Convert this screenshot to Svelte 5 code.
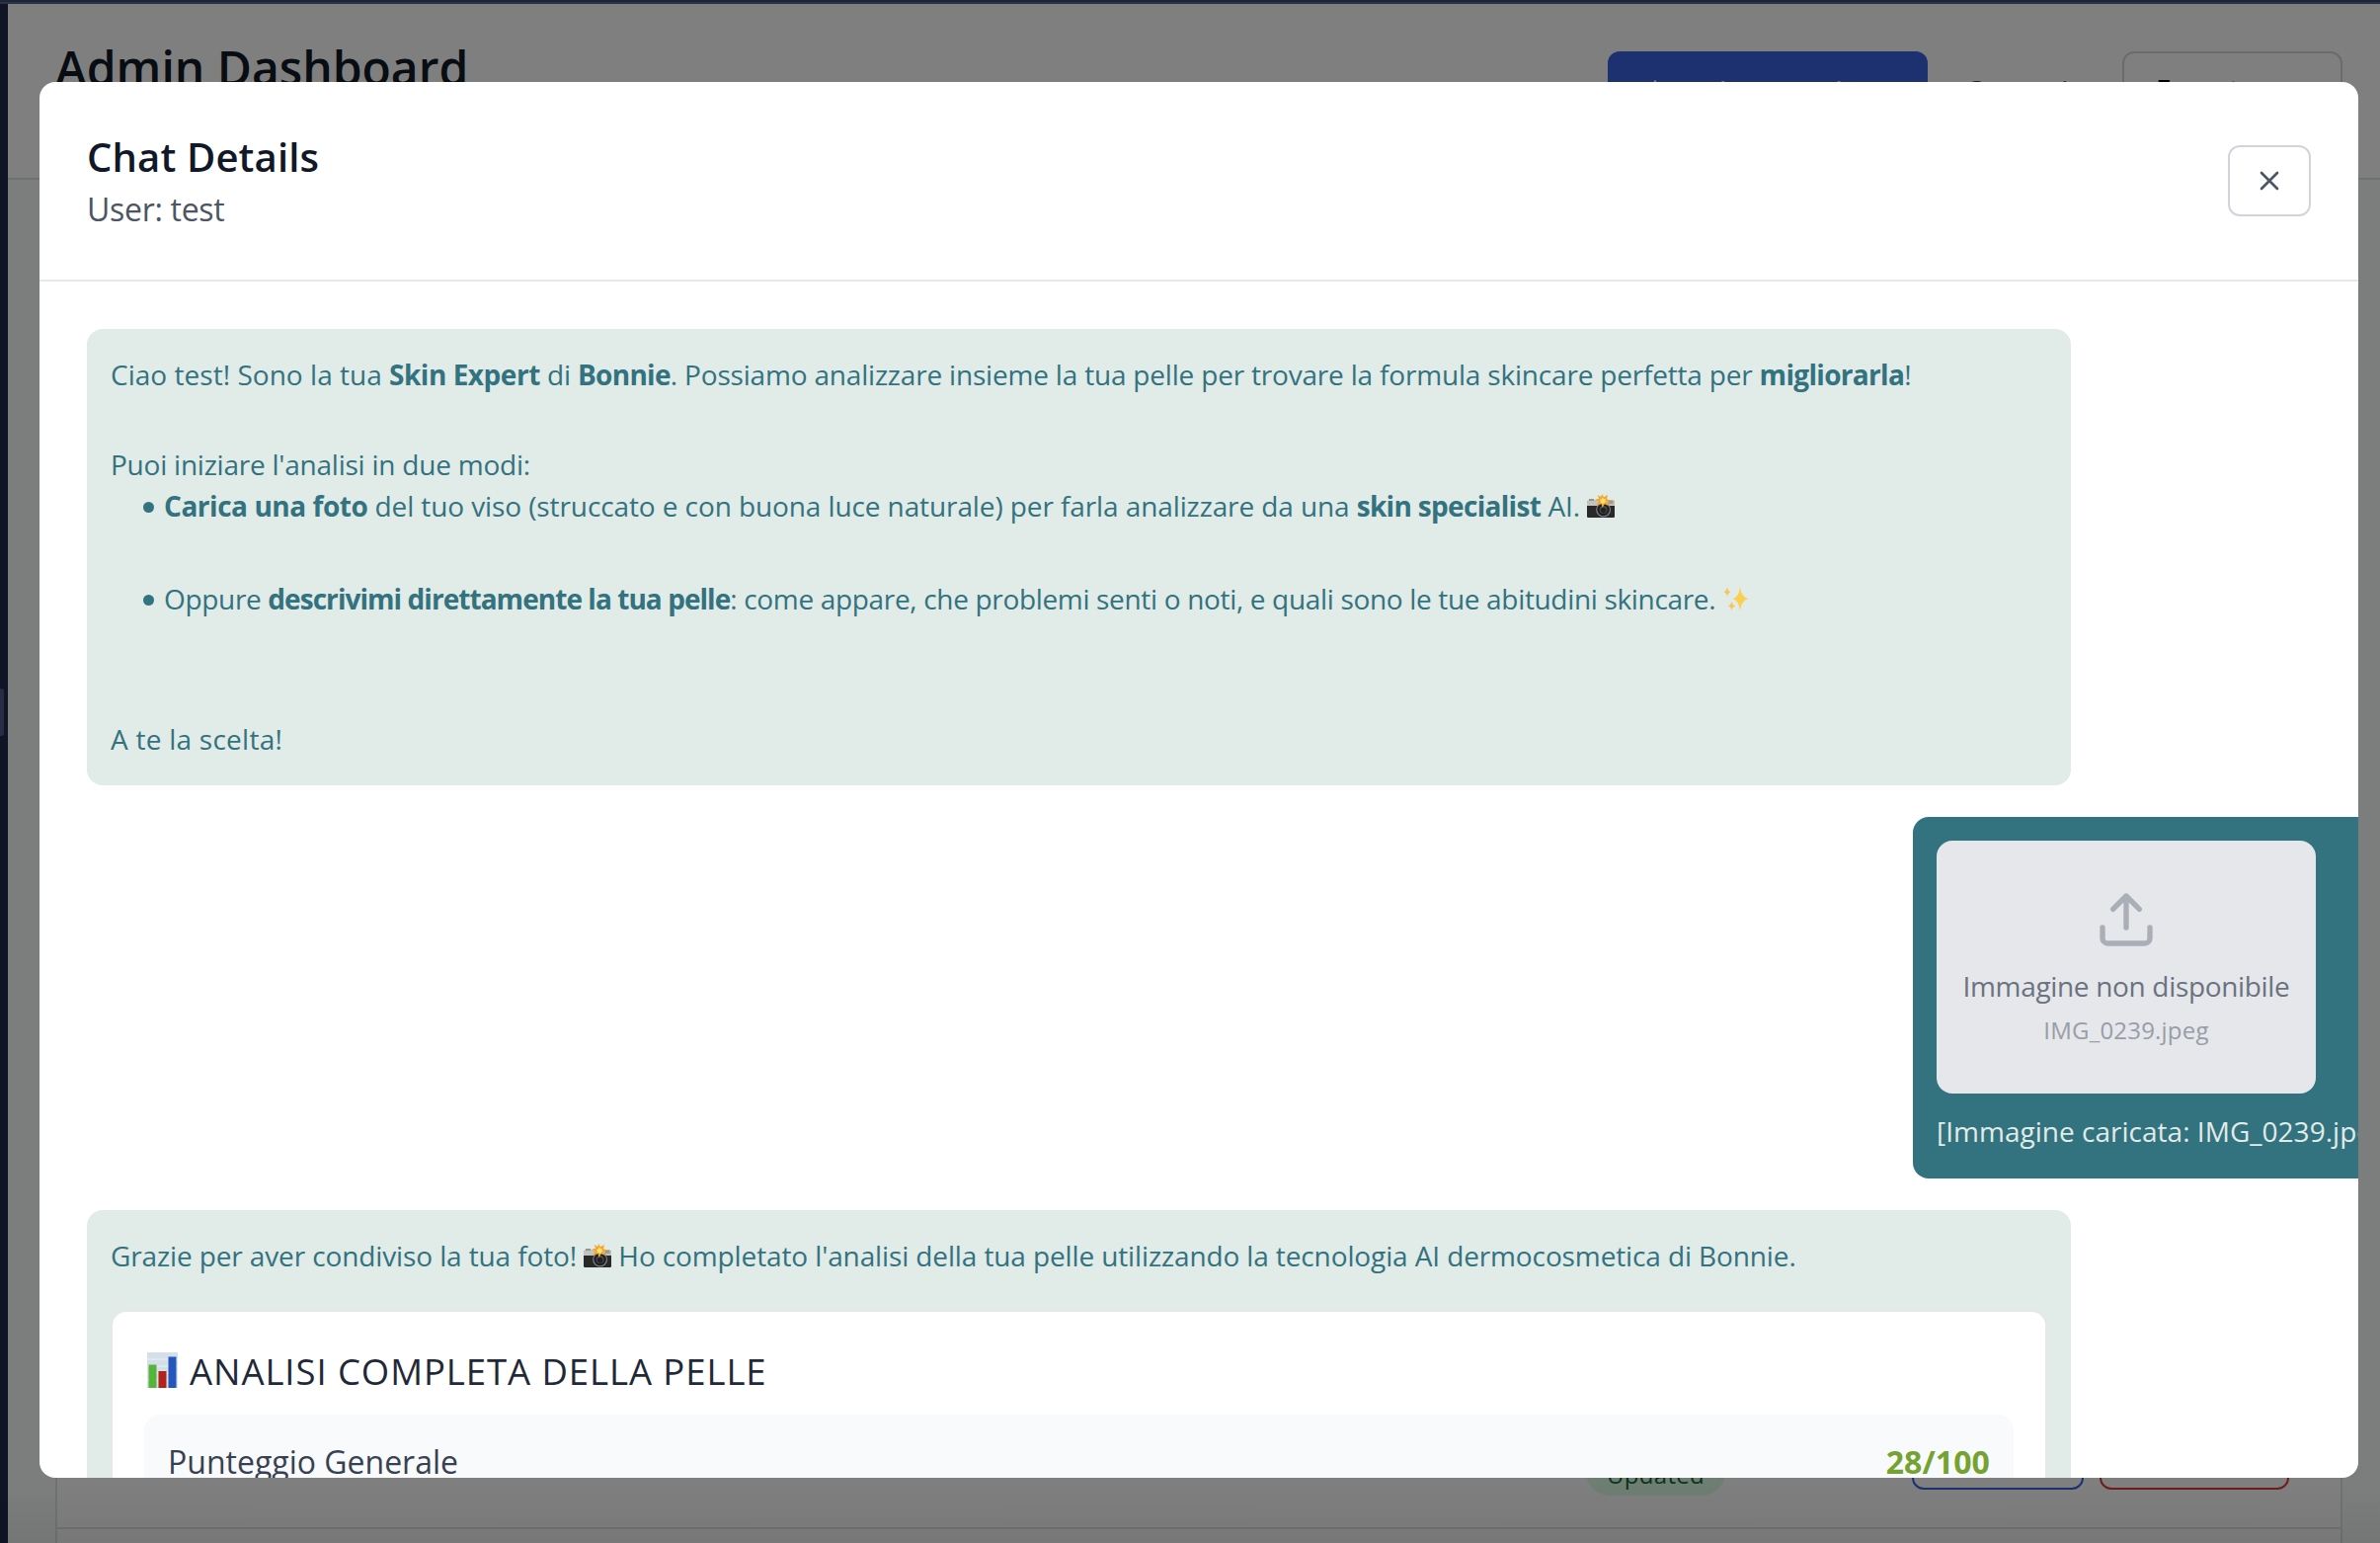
<script>
  const fileName = 'IMG_0239.jpeg';
</script>

{#snippet camera()}
  <svg class="emoji" viewBox="0 0 28 24" aria-label="📸">
    <rect x="0" y="7" width="28" height="17" rx="1.2" fill="#29292a" />
    <path d="M0 12V7.6L2 6h24l2 1.6V12z" fill="#c3c3bf" />
    <rect x="2" y="5" width="5" height="2" fill="#97938a" />
    <rect x="21.5" y="6.5" width="5" height="3.5" fill="#a99b79" />
    <circle cx="16.6" cy="16" r="7.5" fill="#7d7d7d" />
    <circle cx="16.6" cy="16" r="6.2" fill="#1d1e20" />
    <circle cx="16.6" cy="16" r="4" fill="#4a4d51" />
    <circle cx="16.6" cy="16.6" r="2.8" fill="#202226" />
    <path d="M15.3 0l1.7 3.3 4-2.3-1 4.2 4 1.3-4.1 1.5 2 4-4.2-1.7-2 3.7-1.3-4-4.4 1.6 1.7-4-3.6-2 4.2-.9L10.600 1l3.600 2z" fill="#f5a52c" />
    <path d="M15.700 3.300l1.300 2 2-.6-.7 2 1.400 1.300-2 .5-.6 2-1.600-1.400-2.200.4.8-2L12.700 6l2.200-.4z" fill="#ffe577" />
  </svg>
{/snippet}

<div class="screen">
  <aside class="sidebar"><div class="thumb"></div></aside>

  <div class="page">
    <header class="topbar">
      <h1>Admin Dashboard</h1>
      <div class="actions">
        <button class="primary">
          <svg class="plus" viewBox="0 0 24 24"><path d="M12 5v14M5 12h14" /></svg>
          Seleziona Chat
        </button>
        <span class="label">Contatti</span>
        <button class="select">Esporta</button>
      </div>
    </header>
    <main>
      <section class="table">
        <div class="row">
          <span class="badge">Updated</span>
          <div class="row-actions">
            <button class="view" aria-label="View"></button>
            <button class="delete" aria-label="Delete"></button>
          </div>
        </div>
        <div class="row-next"></div>
      </section>
    </main>
  </div>

  <div class="overlay"></div>
  <div class="strip"></div>

  <div class="modal">
    <div class="modal-head">
      <div>
        <h2>Chat Details</h2>
        <p class="user">User: test</p>
      </div>
      <button class="close" aria-label="Close">
        <svg viewBox="0 0 24 24"><path d="M18 6 6 18M6 6l12 12" /></svg>
      </button>
    </div>

    <div class="chat">
      <article class="bot intro">
        <p class="greeting"><span class="hello">Ciao test! Sono la tua</span> <strong>Skin Expert</strong> di <strong class="tight">Bonnie</strong>. Possiamo analizzare insieme la tua pelle per trovare la formula skincare perfetta per <strong class="tight">migliorarla</strong>!</p>
        <p class="lead">Puoi iniziare l'analisi in due modi:</p>
        <ul>
          <li class="photo"><strong>Carica una foto</strong> del tuo viso (struccato e con buona luce naturale) per farla analizzare da una <strong class="tight">skin specialist</strong> AI. {@render camera()}</li>
          <li class="describe">Oppure <strong>descrivimi direttamente la tua pelle</strong>: come appare, che problemi senti o noti, e quali sono le tue abitudini skincare. <svg class="emoji sparkles" viewBox="0 0 28 24" aria-label="✨"><path d="M18 0q1 10.500 8.500 12.300Q19 14 18 24q-1-10-7.500-11.700Q17 10.500 18 0z" fill="#fbd04e" /><path d="M5 0q.5 4.500 3.500 5.300Q5.500 6.200 5 10.300 4.500 6.200 1.500 5.300 4.500 4.500 5 0zM9.500 14.500q.5 4 3.800 4.900-3.300.9-3.800 4.600-.5-3.700-3.600-4.600 3.100-.9 3.600-4.900z" fill="#f9c552" /></svg></li>
        </ul>
        <p class="outro">A te la scelta!</p>
      </article>

      <article class="me">
        <div class="missing">
          <svg class="upload" viewBox="0 0 24 24"><path d="M21 15v4a2 2 0 0 1-2 2H5a2 2 0 0 1-2-2v-4M17 8l-5-5-5 5M12 3v12" /></svg>
          <p class="missing-title">Immagine non disponibile</p>
          <p class="missing-name">{fileName}</p>
        </div>
        <p class="caption">[Immagine caricata: {fileName}]</p>
      </article>

      <article class="bot">
        <p class="thanks">Grazie per aver condiviso la tua foto! {@render camera()} Ho completato l'analisi della tua pelle utilizzando la tecnologia AI dermocosmetica di Bonnie.</p>
        <div class="card">
          <h3>
            <svg class="chart" viewBox="0 0 31 36" aria-label="📊">
              <rect width="31" height="36" fill="#d5dfe9" />
              <path d="M0 7h31M0 14h31M0 21h31M0 28h31" stroke="#e9eff5" />
              <rect x="1.500" y="12.500" width="8" height="23.500" fill="#55b53a" />
              <rect x="11.500" y="19" width="8" height="17" fill="#b12318" />
              <rect x="21.500" y="4.500" width="8" height="31.500" fill="#2457bd" />
            </svg>
            <span>ANALISI COMPLETA DELLA PELLE</span>
          </h3>
          <div class="score">
            <span class="score-name">Punteggio Generale</span>
            <span class="score-value">28/100</span>
          </div>
        </div>
      </article>
    </div>
  </div>
</div>

<style>
  :global(body) {
    background: #1e2536;
  }
  * {
    box-sizing: border-box;
  }
  h1, h2, h3, p, ul {
    margin: 0;
    padding: 0;
  }
  button {
    font: inherit;
    background: none;
    border: 0;
    padding: 0;
  }
  .screen {
    position: relative;
    display: flex;
    width: 2410px;
    height: 1562px;
    overflow: hidden;
    font-family: 'Open Sans', 'Noto Sans', sans-serif;
    font-size: 28px;
    white-space: nowrap;
  }
  .sidebar {
    display: flex;
    align-items: center;
    width: 8px;
    background: #1e2a4b;
  }
  .thumb {
    width: 4px;
    height: 48px;
    margin-top: -120px;
    border-radius: 0 3px 3px 0;
    background: #52598a;
  }
  .page {
    flex: 1;
    display: flex;
    flex-direction: column;
    padding-top: 4px;
    background: #f8fdfa;
  }
  .topbar {
    display: flex;
    justify-content: space-between;
    align-items: flex-start;
    height: 178px;
    padding: 48px 38px 0 48px;
    border-bottom: 2px solid #e2e2e6;
    background: #fff;
  }
  h1 {
    margin-top: -17px;
    font-size: 48px;
    font-weight: 600;
    line-height: 67px;
    color: #111827;
  }
  .actions {
    display: flex;
    line-height: 72px;
    color: #374151;
  }
  .primary {
    display: flex;
    align-items: center;
    gap: 18px;
    width: 324px;
    height: 76px;
    padding: 3px 0 0 32px;
    border-radius: 12px;
    background: #3a62e2;
    color: #fff;
  }
  .plus {
    width: 32px;
    height: 32px;
    fill: none;
    stroke: #fff;
    stroke-width: 2;
    stroke-linecap: round;
  }
  .label {
    width: 197px;
    padding-left: 38px;
    font-weight: 500;
    line-height: 79px;
  }
  .select {
    width: 223px;
    height: 76px;
    padding-left: 32px;
    border: 2px solid #d5d5df;
    border-radius: 12px;
    text-align: left;
    font-weight: 500;
    line-height: 72px;
  }
  main {
    flex: 1;
    display: flex;
    padding: 48px 38px 0 48px;
  }
  .table {
    flex: 1;
    display: flex;
    flex-direction: column;
    justify-content: flex-end;
    border: 2px solid #e2e2e6;
    border-bottom: 0;
    background: #fff;
  }
  .row {
    display: flex;
    justify-content: flex-end;
    align-items: flex-end;
    padding: 0 52px 32px 0;
    border-bottom: 2px solid #e2e2e6;
  }
  .row-next {
    height: 14px;
  }
  .badge {
    width: 141px;
    height: 66px;
    margin-right: 189px;
    padding: 29px 0 5px;
    border-radius: 24px;
    background: #dcfce7;
    color: #166534;
    font-size: 24px;
    font-weight: 500;
    line-height: 32px;
    letter-spacing: 0.3px;
    text-align: center;
  }
  .row-actions {
    display: flex;
    gap: 16px;
    margin-bottom: 6px;
  }
  .view, .delete {
    width: 174px;
    height: 72px;
    border: 2px solid #3560de;
    border-radius: 12px;
  }
  .delete {
    width: 192px;
    border-color: #dc3a34;
  }
  .overlay {
    position: absolute;
    inset: 0;
    background: linear-gradient(transparent 1500px, rgba(0, 0, 0, 0.06)), rgba(0, 0, 0, 0.5);
  }
  .strip {
    position: absolute;
    top: 0;
    left: 0;
    right: 0;
    height: 4px;
    background: #2b334a;
    border-top: 2px solid #1e2536;
  }
  .modal {
    position: absolute;
    top: 83px;
    left: 40px;
    width: 2348px;
    height: 1413px;
    overflow: hidden;
    border-radius: 16px;
    background: #fff;
  }
  .modal-head {
    display: flex;
    justify-content: space-between;
    padding: 48px;
    height: 202px;
    border-bottom: 2px solid #e5e7eb;
  }
  h2 {
    font-size: 40px;
    font-weight: 600;
    line-height: 56.5px;
    letter-spacing: 0.15px;
    color: #111827;
  }
  .user {
    font-size: 32px;
    line-height: 48px;
    letter-spacing: -0.3px;
    color: #4b5563;
  }
  .close {
    display: grid;
    place-items: center;
    width: 84px;
    height: 72px;
    margin-top: 16px;
    border: 2px solid #d1d5db;
    border-radius: 12px;
  }
  .close svg {
    width: 32px;
    height: 32px;
    fill: none;
    stroke: #4b5563;
    stroke-width: 2;
    stroke-linecap: round;
  }
  .chat {
    display: flex;
    flex-direction: column;
    align-items: flex-start;
    gap: 32px;
    padding: 48px;
  }
  .bot {
    width: 2009px;
    padding: 24px;
    border-radius: 16px;
    background: #e1ebe7;
    color: #33727f;
    line-height: 45.5px;
    letter-spacing: -0.12px;
  }
  .intro {
    height: 462px;
  }
  strong {
    font-weight: 700;
    letter-spacing: -0.46px;
  }
  .tight {
    letter-spacing: -0.68px;
  }
  .greeting {
    letter-spacing: -0.19px;
  }
  .hello {
    letter-spacing: 0.03px;
  }
  .lead {
    margin-top: 45.5px;
    letter-spacing: -0.23px;
  }
  ul {
    list-style: none;
  }
  li {
    display: flex;
    align-items: center;
    height: 42px;
    margin-top: -3px;
    padding-left: 33px;
    line-height: 42px;
    letter-spacing: -0.1px;
    white-space: pre;
  }
  li::before {
    content: '';
    width: 11px;
    height: 11px;
    margin: 4px 10px 0 0;
    border-radius: 50%;
    background: #33727f;
  }
  .describe {
    margin-top: 52px;
    letter-spacing: -0.33px;
  }
  .describe strong {
    letter-spacing: -0.95px;
  }
  .outro {
    margin-top: 99px;
    letter-spacing: 0.25px;
  }
  .emoji {
    display: inline-block;
    width: 28px;
    height: 24px;
    vertical-align: -1px;
  }
  .me {
    width: 520px;
    height: 366px;
    margin-left: 1849px;
    padding: 24px;
    border-radius: 16px;
    background: #33727f;
  }
  .missing {
    display: flex;
    flex-direction: column;
    align-items: center;
    width: 384px;
    height: 256px;
    padding-top: 48px;
    border-radius: 16px;
    background: #e5e7eb;
    color: #6b7280;
  }
  .upload {
    width: 64px;
    height: 64px;
    fill: none;
    stroke: #a9aeb7;
    stroke-width: 2;
    stroke-linecap: round;
    stroke-linejoin: round;
  }
  .missing-title {
    margin-top: 14px;
    line-height: 42px;
    letter-spacing: -0.33px;
  }
  .missing-name {
    margin-top: 5px;
    font-size: 24px;
    line-height: 37px;
    letter-spacing: 0.2px;
    color: #989da7;
  }
  .caption {
    margin-top: 16px;
    line-height: 45.5px;
    letter-spacing: 0.02px;
    color: #e1ebe7;
  }
  .thanks {
    height: 45px;
  }
  .card {
    height: 400px;
    margin-top: 32px;
    padding: 32px;
    border: 2px solid #e5e7eb;
    border-radius: 16px;
    background: #fff;
  }
  h3 {
    display: flex;
    align-items: center;
    gap: 12px;
    height: 54px;
    padding-left: 3px;
    font-size: 36.500px;
    font-weight: 500;
    line-height: 56px;
    letter-spacing: 0.92px;
    color: #1f2937;
  }
  h3 span {
    padding-top: 1px;
  }
  .chart {
    width: 31px;
    height: 36px;
  }
  .score {
    display: flex;
    justify-content: space-between;
    margin-top: 18px;
    padding: 24px;
    border-radius: 16px;
    background: #f9fafc;
    font-size: 32px;
    line-height: 48.500px;
  }
  .score-name {
    font-weight: 500;
    letter-spacing: 0;
    color: #374151;
  }
  .score-value {
    font-weight: 700;
    letter-spacing: 0.1px;
    color: #74a331;
  }
</style>
